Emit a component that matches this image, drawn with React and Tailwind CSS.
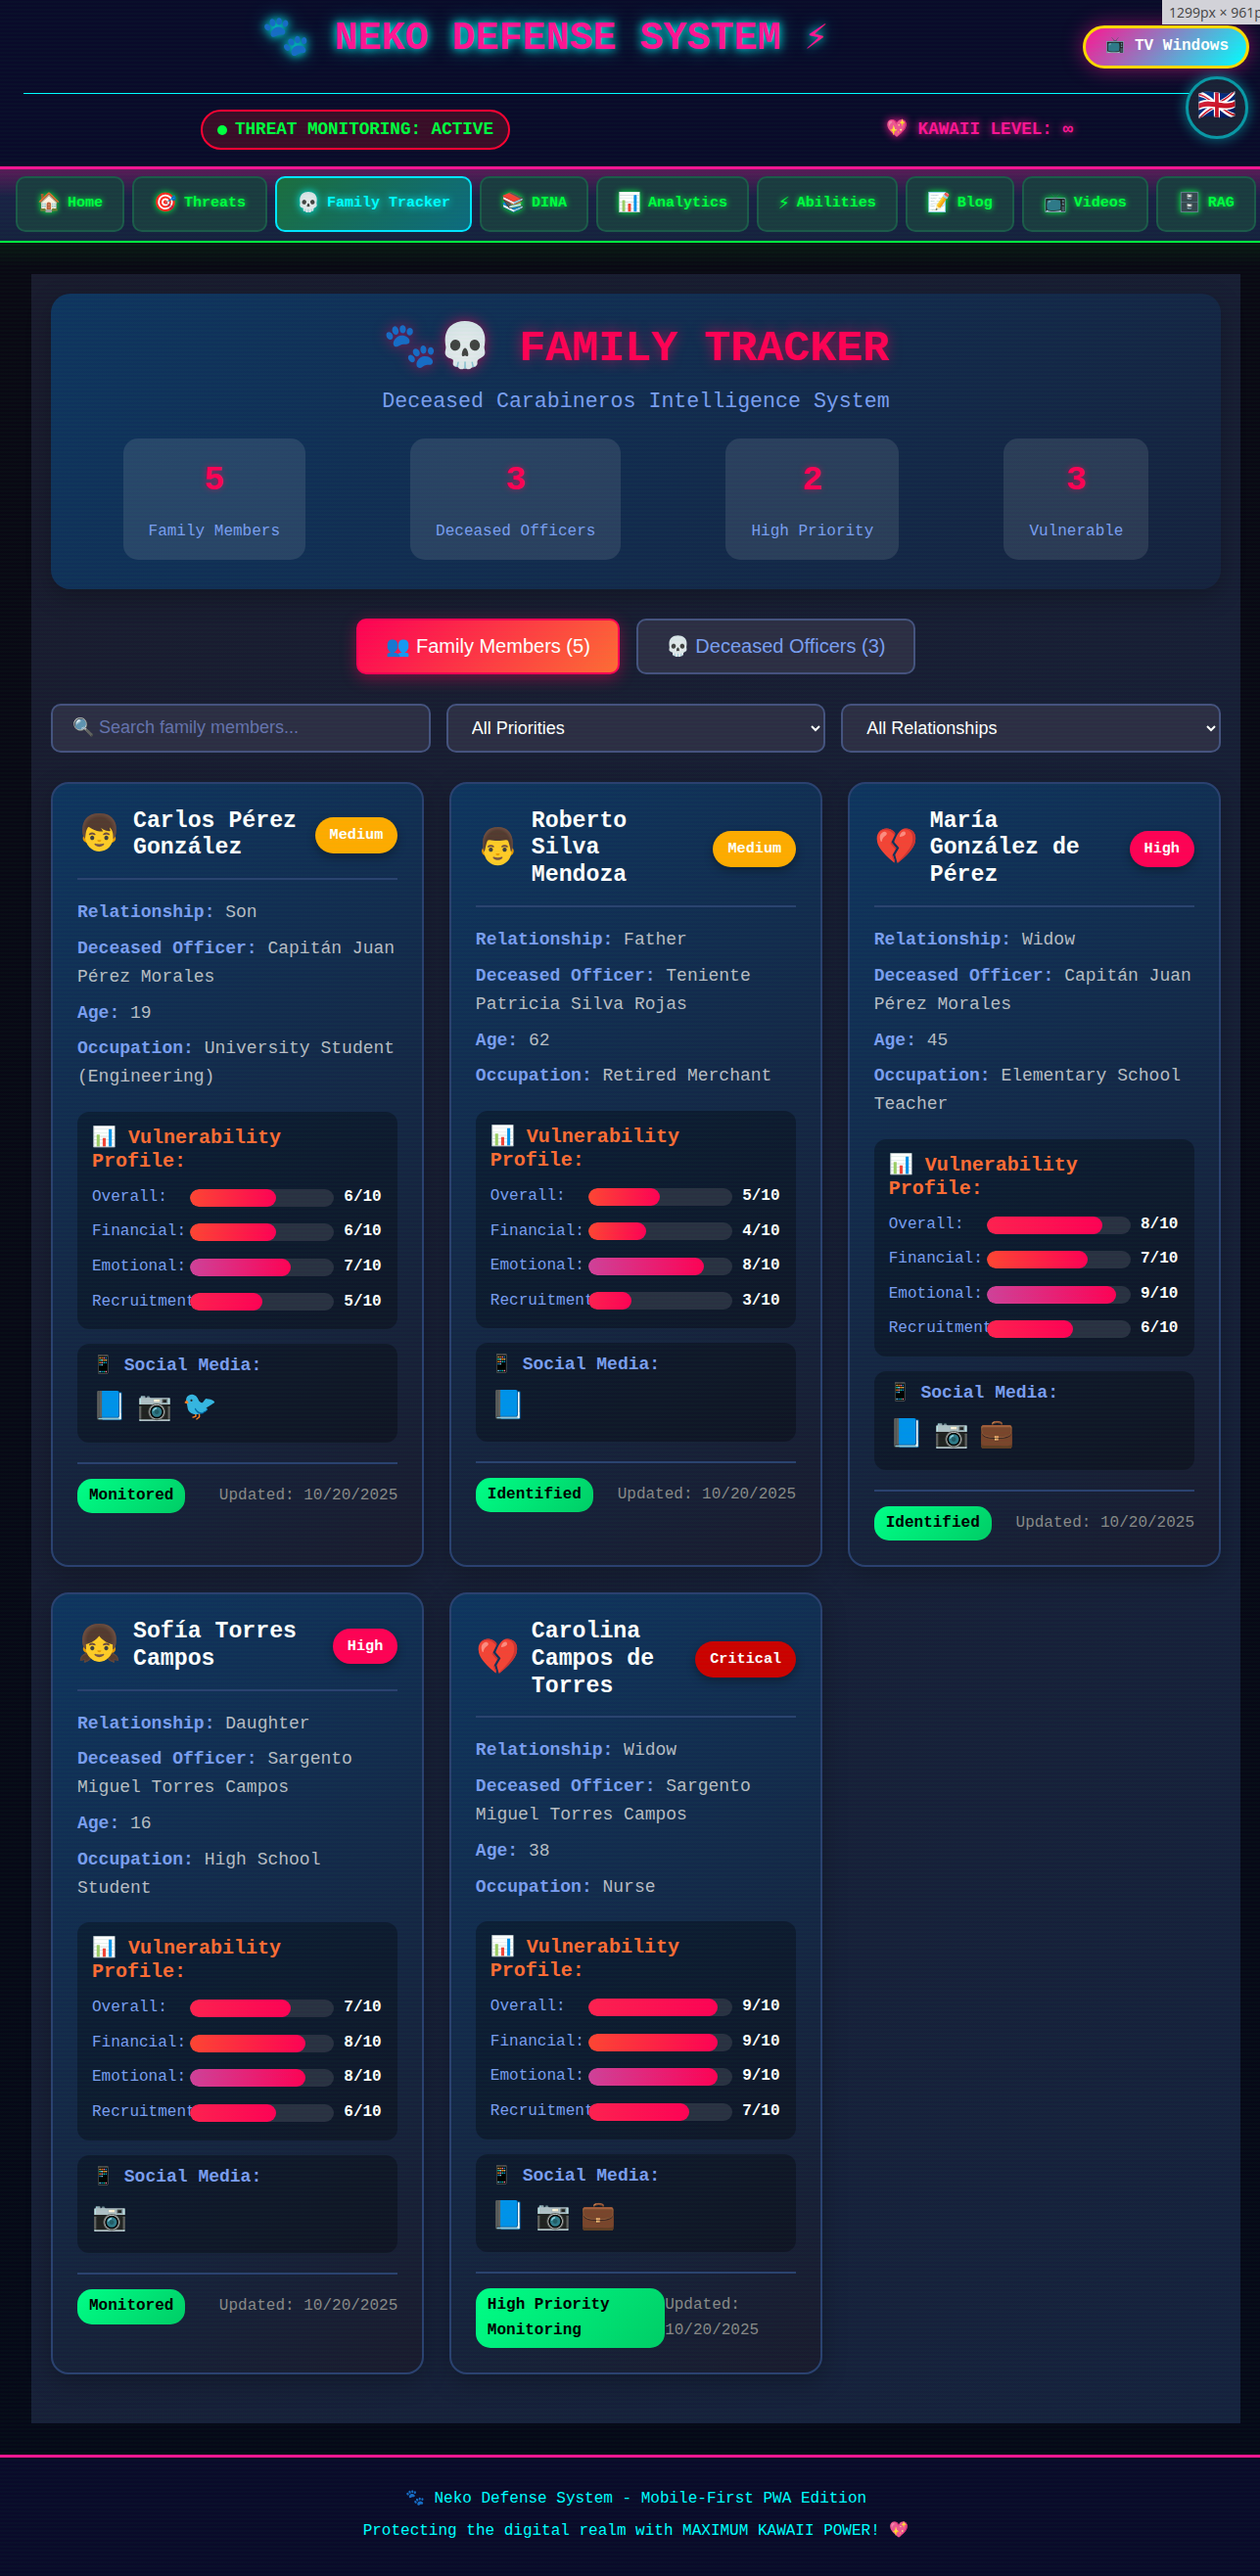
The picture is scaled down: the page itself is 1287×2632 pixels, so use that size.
import React from "react";

const navItems = [
  ["🏠", "Home"], ["🎯", "Threats"], ["💀", "Family Tracker", true], ["📚", "DINA"], ["📊", "Analytics"],
  ["⚡", "Abilities"], ["📝", "Blog"], ["📺", "Videos"], ["🗄️", "RAG"],
];

const stats = [["5", "Family Members"], ["3", "Deceased Officers"], ["2", "High Priority"], ["3", "Vulnerable"]];

const members = [
  { emoji: "👦", name: "Carlos Pérez González", level: "Medium", rel: "Son", officer: "Capitán Juan Pérez Morales", age: 19, job: "University Student (Engineering)", v: [6, 6, 7, 5], social: ["📘", "📷", "🐦"], status: "Monitored" },
  { emoji: "👨", name: "Roberto Silva Mendoza", level: "Medium", rel: "Father", officer: "Teniente Patricia Silva Rojas", age: 62, job: "Retired Merchant", v: [5, 4, 8, 3], social: ["📘"], status: "Identified" },
  { emoji: "💔", name: "María González de Pérez", level: "High", rel: "Widow", officer: "Capitán Juan Pérez Morales", age: 45, job: "Elementary School Teacher", v: [8, 7, 9, 6], social: ["📘", "📷", "💼"], status: "Identified" },
  { emoji: "👧", name: "Sofía Torres Campos", level: "High", rel: "Daughter", officer: "Sargento Miguel Torres Campos", age: 16, job: "High School Student", v: [7, 8, 8, 6], social: ["📷"], status: "Monitored" },
  { emoji: "💔", name: "Carolina Campos de Torres", level: "Critical", rel: "Widow", officer: "Sargento Miguel Torres Campos", age: 38, job: "Nurse", v: [9, 9, 9, 7], social: ["📘", "📷", "💼"], status: "High Priority Monitoring" },
];

const levelClass = {
  Medium: "bg-[#ffaa00]",
  High: "bg-[#ff0055]",
  Critical: "bg-[#cc0000]",
};

const barLabels = ["Overall:", "Financial:", "Emotional:", "Recruitment:"];

function barGradient(i, value) {
  if (i === 2) return "linear-gradient(90deg,#d0409a,#ff0055)";
  if (i === 3) return "linear-gradient(90deg,#ff2050,#ff0055)";
  if (i === 0 && value >= 7) return "linear-gradient(90deg,#ff2050,#ff0055)";
  return "linear-gradient(90deg,#ff4433,#ff0055)";
}

function Field({ label, value }) {
  return (
    <p className="mb-2 text-[18px] leading-[28.8px] text-[#b8bcc4]">
      <strong className="font-bold text-[#7b9df0]">{label}:</strong> {value}
    </p>
  );
}

function Card({ m }) {
  return (
    <article className="flex flex-col rounded-[18px] border-2 border-[#2b4070] bg-[linear-gradient(145deg,#0f3460,#1a1a2e)] p-[25px] shadow-[0_8px_24px_rgba(0,0,0,0.25)]">
      <header className="mb-[19px] flex items-center gap-3 border-b-2 border-[#2b4070] pb-4">
        <span className="shrink-0 text-[36px] leading-[45px]">{m.emoji}</span>
        <h3 className="min-w-0 flex-1 text-[23.2px] font-bold leading-[27.84px] text-white">{m.name}</h3>
        <span className={`shrink-0 rounded-[20px] px-[15px] py-1.5 text-[15.2px] font-bold leading-[24.3px] text-white shadow-[0_4px_10px_rgba(0,0,0,0.3)] ${levelClass[m.level]}`}>{m.level}</span>
      </header>
      <Field label="Relationship" value={m.rel} />
      <Field label="Deceased Officer" value={m.officer} />
      <Field label="Age" value={m.age} />
      <Field label="Occupation" value={m.job} />
      <section className="mt-[12.8px] rounded-[12px] bg-[rgba(0,0,0,0.3)] p-[15px]">
        <h4 className="mb-3 text-[20px] font-bold leading-[24px] text-[#ff6b35]">📊 Vulnerability Profile:</h4>
        <div className="flex flex-col gap-2.5">
          {barLabels.map((label, i) => (
            <div key={label} className="flex items-center gap-2.5 text-[16px] leading-[25.6px]">
              <span className="w-[100px] shrink-0 whitespace-nowrap text-[#7b9df0]">{label}</span>
              <div className="relative ml-[-10px] h-[18px] flex-1 overflow-hidden rounded-[10px] bg-[#2a3042]">
                <div className="h-full rounded-[10px]" style={{ width: `${m.v[i] * 10}%`, background: barGradient(i, m.v[i]) }} />
              </div>
              <span className="w-10 shrink-0 font-bold text-white">{m.v[i]}/10</span>
            </div>
          ))}
        </div>
      </section>
      <section className="mt-[15px] rounded-[12px] bg-[rgba(0,0,0,0.3)] px-[15px] pb-[15px] pt-3">
        <h4 className="mb-3 text-[18px] font-bold leading-[21.6px] text-[#7b9df0]">📱 Social Media:</h4>
        <div className="flex gap-2.5 text-[28.8px] leading-[40px]">
          {m.social.map((s, i) => <span key={i}>{s}</span>)}
        </div>
      </section>
      <footer className="mt-5 flex items-center justify-between border-t-2 border-[#2b4070] pt-[15px] text-[16px] leading-[25.6px]">
        <span className="rounded-[15px] bg-[linear-gradient(135deg,#00ff88,#00cc66)] px-3 py-[5px] font-bold text-black">{m.status}</span>
        <span className="text-[#888888]">Updated: 10/20/2025</span>
      </footer>
    </article>
  );
}

export default function App() {
  return (
    <div className="relative min-h-[2632px] overflow-hidden bg-[#060818] font-['Liberation_Mono',monospace] text-white">
      <header className="relative h-[173px] border-b-[3px] border-[#ff1493] bg-[#0a0a2a] px-6">
        <div className="h-[96px] border-b border-[#00ffff] pr-[174px] pt-2">
          <h1 className="whitespace-nowrap text-center text-[40px] font-bold leading-[64px] text-[#ff1493] [text-shadow:0_0_10px_#00ffff,0_0_20px_rgba(0,255,255,0.5)]">🐾 NEKO DEFENSE SYSTEM ⚡</h1>
        </div>
        <div className="flex items-center justify-between pl-[181px] pr-[167px] pt-4">
          <div className="flex items-center gap-2 rounded-[22px] border-2 border-[#ff0033] bg-[#3a0c28] px-[15px] py-2 text-[17.6px] font-bold leading-[21px] text-[#00ff41]">
            <span className="h-2.5 w-2.5 rounded-full bg-[#00ff41]" />
            THREAT MONITORING: ACTIVE
          </div>
          <div className="text-[17.6px] font-bold text-[#ff1493] [text-shadow:0_0_8px_#ff1493]">💖 KAWAII LEVEL: ∞</div>
        </div>
        <button className="absolute right-[11px] top-[26px] whitespace-nowrap rounded-full border-[3px] border-[#ffd700] bg-[linear-gradient(135deg,#ff1493,#00ffff)] py-1.5 pl-5 pr-[18px] text-[16px] font-bold leading-[25.6px] text-white shadow-[0_0_20px_rgba(255,20,147,0.5)]">📺 TV Windows</button>
        <button className="absolute right-[12px] top-[78px] flex h-16 w-16 items-center justify-center rounded-full border-[3px] border-[#0a97a6] bg-[#1a2036] text-[32px] leading-none shadow-[0_0_14px_rgba(0,255,255,0.45)]">🇬🇧</button>
      </header>

      <nav className="flex h-[75px] items-center gap-2 whitespace-nowrap border-b-2 border-[#00ff41] bg-[linear-gradient(180deg,#5a1a58_0,#1a2145_28px,#16213e_100%)] px-4 pb-[2px]">
        {navItems.map(([icon, label, active]) => (
          <a key={label} className={active
            ? "flex h-[57px] shrink-0 items-center gap-[7px] rounded-[10px] border-2 border-[#00e5ff] bg-[linear-gradient(135deg,#1c6d3f,#0d6a80)] px-5 text-[15px] font-bold text-[#00ffff] [text-shadow:0_0_8px_#00ffff]"
            : "flex h-[57px] shrink-0 items-center gap-[7px] rounded-[10px] border-2 border-[#1c5a4a] bg-[#1b3a40] px-5 text-[15px] font-bold text-[#00ff41] [text-shadow:0_0_6px_#00ff41]"}>
            <span className="text-[19.2px] leading-none">{icon}</span>
            {label}
          </a>
        ))}
      </nav>

      <main className="bg-[linear-gradient(180deg,#0a1a14_0,#0a0814_24px,#060818_100%)] pb-8 pl-8 pr-5 pt-8">
        <div className="bg-[linear-gradient(135deg,#1a1a2e,#16213e)] px-5 pb-[50px] pt-5">
          <section className="mb-[30px] rounded-[20px] bg-[linear-gradient(135deg,#0f3460,#16213e)] px-5 pb-[30px] pt-[21px] shadow-[0_8px_24px_rgba(0,0,0,0.25)]">
            <h2 className="text-center text-[45px] font-bold leading-[72px] text-[#ff0055] [text-shadow:0_0_14px_rgba(255,0,85,0.6)]">🐾💀 FAMILY TRACKER</h2>
            <p className="mb-5 text-center text-[21.6px] leading-[34.6px] text-[#7b9df0]">Deceased Carabineros Intelligence System</p>
            <div className="flex justify-around">
              {stats.map(([n, l]) => (
                <div key={l} className="h-[124px] rounded-[15px] bg-[rgba(255,255,255,0.1)] px-[26px] py-[15px] text-center">
                  <div className="mb-3 text-[35.2px] font-bold leading-[56px] text-[#ff0055] [text-shadow:0_0_6px_rgba(255,0,85,0.5)]">{n}</div>
                  <div className="text-[16px] leading-[25.6px] text-[#7b9df0]">{l}</div>
                </div>
              ))}
            </div>
          </section>

          <div className="mb-[30px] flex justify-center gap-[17px] font-['Liberation_Sans',sans-serif] text-[20px]">
            <button className="h-[57px] rounded-[10px] border-2 border-[#ff0055] bg-[linear-gradient(135deg,#ff0055,#ff6b35)] px-[28px] text-white shadow-[0_4px_16px_rgba(255,0,85,0.4)]">👥 Family Members (5)</button>
            <button className="h-[57px] rounded-[10px] border-2 border-[#46527f] bg-[#2d2d44] px-[28px] text-[#7b9df0]">💀 Deceased Officers (3)</button>
          </div>

          <div className="mb-[30px] grid grid-cols-3 gap-4 font-['Liberation_Sans',sans-serif] text-[18px]">
            <input className="h-[50px] rounded-[10px] border-2 border-[#46527f] bg-[#2d2d44] px-[20px] text-white placeholder:text-[#6672ad]" placeholder="🔍 Search family members..." />
            <select className="h-[50px] rounded-[10px] border-2 border-[#46527f] bg-[#2d2d44] px-[20px] text-white"><option>All Priorities</option></select>
            <select className="h-[50px] rounded-[10px] border-2 border-[#46527f] bg-[#2d2d44] px-[20px] text-white"><option>All Relationships</option></select>
          </div>

          <div className="grid grid-cols-3 gap-[25.6px]">
            {members.map((m) => <Card key={m.name} m={m} />)}
          </div>
        </div>
      </main>

      <footer className="border-t-[3px] border-[#ff1493] bg-[#0a0a2a] pb-[35px] pl-9 pr-6 pt-[30px] text-center text-[16px] leading-[25.6px] text-[#00ffff]">
        <p className="mb-[7px]">🐾 Neko Defense System - Mobile-First PWA Edition</p>
        <p>Protecting the digital realm with MAXIMUM KAWAII POWER! 💖</p>
      </footer>

      <div className="pointer-events-none absolute inset-0 bg-[repeating-linear-gradient(0deg,rgba(0,255,65,0.025)_0,rgba(0,255,65,0.025)_2px,transparent_2px,transparent_4px)]" />
      <div className="pointer-events-none absolute right-0 top-0 h-[25px] w-[100px] overflow-hidden whitespace-nowrap bg-[#d2d2d8] pl-[7px] font-['Open_Sans',sans-serif] text-[14px] leading-[25px] text-[#444]">1299px × 961px</div>
    </div>
  );
}
